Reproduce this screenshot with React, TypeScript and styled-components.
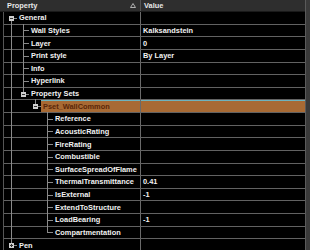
import React from 'react';
import styled, { createGlobalStyle, css } from 'styled-components';

type Guide = 'none' | 'full' | 'top' | 'bottom';

interface Item {
  label: string;
  value?: string;
  level: number;
  guides: Guide[];
  box?: 'minus' | 'plus';
  selected?: boolean;
}

const ROW_H = 12.63;

const pset = (label: string, value?: string, last = false): Item => ({
  label,
  value,
  level: 3,
  guides: ['full', 'none', 'none', last ? 'top' : 'full'],
});

const general = (label: string, value?: string): Item => ({
  label,
  value,
  level: 1,
  guides: ['full', 'full'],
});

const items: Item[] = [
  { label: 'General', level: 0, guides: ['bottom'], box: 'minus' },
  general('Wall Styles', 'Kalksandstein'),
  general('Layer', '0'),
  general('Print style', 'By Layer'),
  general('Info'),
  general('Hyperlink'),
  { label: 'Property Sets', level: 1, guides: ['full', 'top'], box: 'minus' },
  { label: 'Pset_WallCommon', level: 2, guides: ['full', 'none', 'top'], box: 'minus', selected: true },
  pset('Reference'),
  pset('AcousticRating'),
  pset('FireRating'),
  pset('Combustible'),
  pset('SurfaceSpreadOfFlame'),
  pset('ThermalTransmittance', '0.41'),
  pset('IsExternal', '-1'),
  pset('ExtendToStructure'),
  pset('LoadBearing', '-1'),
  pset('Compartmentation', undefined, true),
  { label: 'Pen', level: 0, guides: ['top'], box: 'plus' },
];

const GlobalStyle = createGlobalStyle`
  html, body {
    margin: 0;
    padding: 0;
    background: #000;
  }
  body {
    font-family: "Liberation Sans", Arial, sans-serif;
  }
`;

const Panel = styled.div`
  width: 310px;
  height: 250px;
  display: flex;
  overflow: hidden;
  background: #000;
  color: #f2f2f2;
  font-size: 7.4px;
  font-weight: 700;
`;

const Main = styled.div`
  flex: 1;
  display: flex;
  flex-direction: column;
  min-width: 0;
`;

const Scrollbar = styled.div`
  width: 4px;
  background: #3a3a3a;
  border-left: 1px solid #5a5a5a;
`;

const Header = styled.div`
  height: 12px;
  flex: none;
  display: flex;
  background: #2e2e2e;
  border-bottom: 1px solid #1a1a1a;
  box-sizing: border-box;
  color: #e8e8e8;
`;

const HeaderCell = styled.div<{ $first?: boolean }>`
  display: flex;
  align-items: center;
  box-sizing: border-box;
  ${(p) =>
    p.$first
      ? css`
          width: 140px;
          padding-left: 7px;
          padding-right: 4px;
          justify-content: space-between;
        `
      : css`
          flex: 1;
          padding-left: 3px;
          border-left: 1px solid #555;
        `}
`;

const Body = styled.div`
  flex: 1;
  padding-left: 3px;
`;

const Tree = styled.div`
  border-left: 1px solid #555;
  height: 100%;
`;

const Row = styled.div`
  height: ${ROW_H}px;
  display: flex;
  box-sizing: border-box;
  border-bottom: 1px solid #626262;
`;

const NameCell = styled.div`
  width: 136px;
  flex: none;
  display: flex;
  padding-left: 1px;
  box-sizing: border-box;
`;

const Lane = styled.div<{ $guide: Guide; $own?: boolean }>`
  width: 12px;
  flex: none;
  position: relative;

  &::before {
    content: '';
    position: absolute;
    left: 6px;
    width: 1px;
    background: #8a8a8a;
    display: ${(p) => (p.$guide === 'none' ? 'none' : 'block')};
    top: ${(p) => (p.$guide === 'bottom' ? '50%' : '-1px')};
    bottom: ${(p) => (p.$guide === 'top' ? '50%' : '-1px')};
  }

  ${(p) =>
    p.$own &&
    css`
      &::after {
        content: '';
        position: absolute;
        left: 6px;
        right: 0;
        top: 50%;
        height: 1px;
        background: #8a8a8a;
      }
    `}
`;

const Box = styled.div<{ $plus?: boolean }>`
  position: absolute;
  left: 4px;
  top: 50%;
  width: 5px;
  height: 5px;
  margin-top: -2px;
  background: #d0d0d0;
  z-index: 1;

  &::before {
    content: '';
    position: absolute;
    left: 1px;
    right: 1px;
    top: 2px;
    height: 1px;
    background: #333;
  }

  ${(p) =>
    p.$plus &&
    css`
      &::after {
        content: '';
        position: absolute;
        top: 1px;
        bottom: 1px;
        left: 2px;
        width: 1px;
        background: #333;
      }
    `}
`;

const Label = styled.div<{ $selected?: boolean }>`
  flex: 1;
  display: flex;
  align-items: center;
  padding-left: 2px;
  white-space: nowrap;
  ${(p) =>
    p.$selected &&
    css`
      background: #a86a34;
      box-shadow: inset 0 1px 0 #6fb3bd;
      color: #5a2608;
    `}
`;

const ValueCell = styled.div<{ $selected?: boolean }>`
  flex: 1;
  display: flex;
  align-items: center;
  padding-left: 2px;
  border-left: 1px solid #6a6a6a;
  white-space: nowrap;
  ${(p) =>
    p.$selected &&
    css`
      background: #a86a34;
      box-shadow: inset 0 1px 0 #6fb3bd;
    `}
`;

const SortArrow = () => (
  <svg width="6" height="5" viewBox="0 0 6 5">
    <path d="M3 0.5 L5.5 4.5 L0.5 4.5 Z" fill="none" stroke="#bdbdbd" strokeWidth="0.9" />
  </svg>
);

const App = () => {
  return (
    <>
      <GlobalStyle />
      <Panel>
        <Main>
          <Header>
            <HeaderCell $first>
              <span>Property</span>
              <SortArrow />
            </HeaderCell>
            <HeaderCell>Value</HeaderCell>
          </Header>
          <Body>
            <Tree>
              {items.map((item) => (
                <Row key={item.label}>
                  <NameCell>
                    {item.guides.map((g, i) => (
                      <Lane key={i} $guide={g} $own={i === item.level}>
                        {i === item.level && item.box && <Box $plus={item.box === 'plus'} />}
                      </Lane>
                    ))}
                    <Label $selected={item.selected}>{item.label}</Label>
                  </NameCell>
                  <ValueCell $selected={item.selected}>{item.value}</ValueCell>
                </Row>
              ))}
            </Tree>
          </Body>
        </Main>
        <Scrollbar />
      </Panel>
    </>
  );
};

export default App;
